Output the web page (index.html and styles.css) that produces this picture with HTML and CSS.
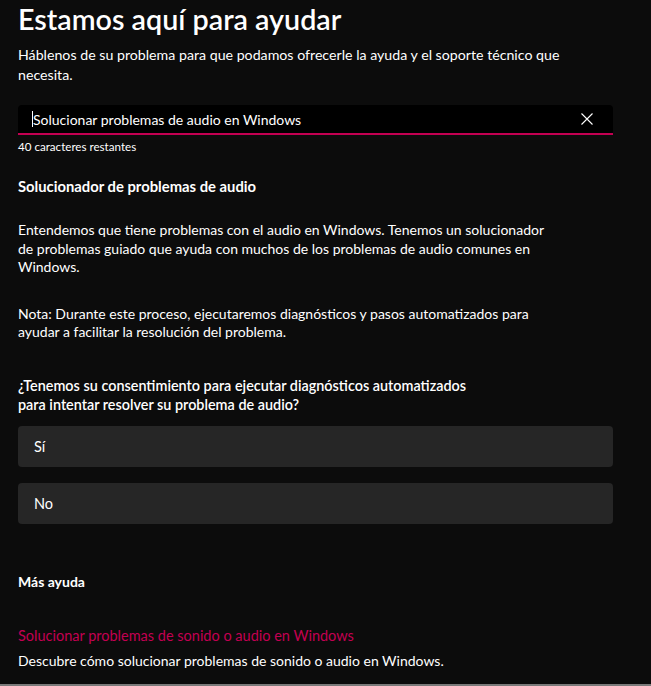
FILE: index.html
```html
<!DOCTYPE html>
<html lang="es">
<head>
<meta charset="utf-8">
<title>Estamos aquí para ayudar</title>
<link rel="stylesheet" href="styles.css">
</head>
<body>
<main class="page">
  <h1 class="title">Estamos aquí para ayudar</h1>
  <p class="lead">Háblenos de su problema para que podamos ofrecerle la ayuda y el soporte técnico que necesita.</p>

  <div class="search">
    <span class="caret"></span>
    <span class="search-text">Solucionar problemas de audio en Windows</span>
    <svg class="clear" width="12" height="12" viewBox="0 0 12 12" aria-hidden="true">
      <path d="M0.5 0.5 L11.5 11.5 M11.5 0.5 L0.5 11.5" stroke="#ffffff" stroke-width="1.1" fill="none"/>
    </svg>
  </div>
  <div class="counter">40 caracteres restantes</div>

  <h2 class="section-title">Solucionador de problemas de audio</h2>
  <p class="para">Entendemos que tiene problemas con el audio en Windows. Tenemos un solucionador<br>de problemas guiado que ayuda con muchos de los problemas de audio comunes en<br>Windows.</p>
  <p class="para note">Nota: Durante este proceso, ejecutaremos diagnósticos y pasos automatizados para<br>ayudar a facilitar la resolución del problema.</p>

  <p class="question">¿Tenemos su consentimiento para ejecutar diagnósticos automatizados<br>para intentar resolver su problema de audio?</p>

  <div class="options">
    <button class="option">Sí</button>
    <button class="option">No</button>
  </div>

  <h3 class="more-title">Más ayuda</h3>
  <a class="link" href="#">Solucionar problemas de sonido o audio en Windows</a>
  <p class="desc">Descubre cómo solucionar problemas de sonido o audio en Windows.</p>
</main>
</body>
</html>
```

FILE: styles.css
```css
html, body {
  margin: 0;
  padding: 0;
  background: #0c0c0c;
}

body {
  font-family: Lato, "Noto Sans", sans-serif;
  color: #ffffff;
}

.page {
  box-sizing: border-box;
  min-height: 686px;
  padding: 0 38px 0 18px;
  border-bottom: 2px solid #7a7a7a;
}

.title {
  margin: 0;
  padding-top: 2px;
  font-size: 28.7px;
  font-weight: 600;
  line-height: 34px;
}

.lead {
  margin: 9px 0 0;
  font-size: 14.2px;
  line-height: 20px;
  width: 560px;
}

.search {
  margin-top: 20px;
  height: 28px;
  background: #000000;
  border-bottom: 2px solid #c30052;
  border-radius: 4px 4px 0 0;
  display: flex;
  align-items: center;
  padding: 0 20px 0 14px;
}

.caret {
  width: 1px;
  height: 16px;
  background: #ffffff;
}

.search-text {
  flex: 1;
  font-size: 14px;
}

.clear {
  display: block;
}

.counter {
  margin-top: 5px;
  font-size: 11.6px;
  line-height: 14px;
}

.section-title {
  margin: 22px 0 0;
  font-size: 14.8px;
  font-weight: 700;
  line-height: 20px;
}

.para {
  margin: 25px 0 0;
  font-size: 14px;
  line-height: 18.5px;
}

.note {
  margin-top: 28px;
}

.question {
  margin: 34.5px 0 0;
  font-size: 14.4px;
  font-weight: 600;
  line-height: 19px;
}

.options {
  margin-top: 12px;
  display: flex;
  flex-direction: column;
  gap: 16px;
}

.option {
  height: 41px;
  border: none;
  border-radius: 4px;
  background: #262626;
  color: #ffffff;
  font-family: inherit;
  font-size: 14.5px;
  text-align: left;
  padding: 0 16px;
}

.more-title {
  margin: 48px 0 0;
  font-size: 14px;
  font-weight: 700;
  line-height: 20px;
}

.link {
  display: block;
  margin-top: 34px;
  color: #c30052;
  font-size: 14.5px;
  line-height: 20px;
  text-decoration: none;
}

.desc {
  margin: 5px 0 0;
  font-size: 14px;
  line-height: 20px;
}
```
